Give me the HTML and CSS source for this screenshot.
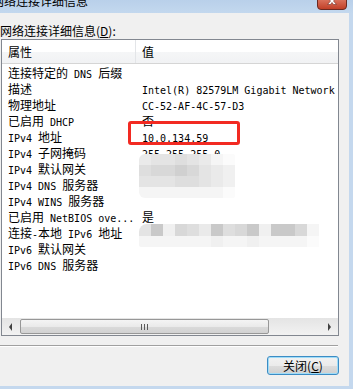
FILE: index.html
```html
<!DOCTYPE html>
<html lang="zh-CN">
<head>
    <meta charset="UTF-8">
    <title>网络连接详细信息</title>
    <link rel="stylesheet" href="styles.css">
</head>
<body>
    <div class="window">
        <div class="titlebar">
            <span class="title">网络连接详细信息</span>
            <svg class="close" width="30" height="10" viewBox="0 0 30 10">
                <defs>
                    <linearGradient id="closeFill" x1="0" y1="0" x2="0" y2="1">
                        <stop offset="0" stop-color="#d9705a"/>
                        <stop offset="1" stop-color="#c03d25"/>
                    </linearGradient>
                </defs>
                <path d="M0.5 0 V6 Q0.5 9.5 4 9.5 H26 Q29.5 9.5 29.5 6 V0" fill="url(#closeFill)" stroke="#6b2a22"/>
                <path d="M10.5 -2 L13.5 1 L10.5 4.5 H13.5 L15 2.5 L16.5 4.5 H19.5 L16.5 1 L19.5 -2" fill="#fff" stroke="#7d3a30" stroke-width="0.7"/>
            </svg>
        </div>
        <div class="frame">
            <div class="client">
                <div class="caption">网络连接详细信息(<u>D</u>):</div>

                <div class="listbox">
                    <div class="lv-head">
                        <div class="col-prop">属性</div>
                        <div class="col-val">值</div>
                    </div>
                    <div class="lv-body">
                        <div class="lv-row"><div class="col-prop">连接特定的<span class="en"> DNS </span>后缀</div><div class="col-val"></div></div>
                        <div class="lv-row"><div class="col-prop">描述</div><div class="col-val"><span class="en">Intel(R) 82579LM Gigabit Network Connection</span></div></div>
                        <div class="lv-row"><div class="col-prop">物理地址</div><div class="col-val"><span class="en">CC-52-AF-4C-57-D3</span></div></div>
                        <div class="lv-row"><div class="col-prop">已启用<span class="en"> DHCP</span></div><div class="col-val">否</div></div>
                        <div class="lv-row"><div class="col-prop"><span class="en">IPv4 </span>地址</div><div class="col-val"><span class="en">10.0.134.59</span></div></div>
                        <div class="lv-row"><div class="col-prop"><span class="en">IPv4 </span>子网掩码</div><div class="col-val"><span class="en">255.255.255.0</span></div></div>
                        <div class="lv-row"><div class="col-prop"><span class="en">IPv4 </span>默认网关</div><div class="col-val"></div></div>
                        <div class="lv-row"><div class="col-prop"><span class="en">IPv4 DNS </span>服务器</div><div class="col-val"></div></div>
                        <div class="lv-row"><div class="col-prop"><span class="en">IPv4 WINS </span>服务器</div><div class="col-val"></div></div>
                        <div class="lv-row"><div class="col-prop">已启用<span class="en"> NetBIOS ove...</span></div><div class="col-val">是</div></div>
                        <div class="lv-row"><div class="col-prop">连接<span class="en">-</span>本地<span class="en"> IPv6 </span>地址</div><div class="col-val"></div></div>
                        <div class="lv-row"><div class="col-prop"><span class="en">IPv6 </span>默认网关</div><div class="col-val"></div></div>
                        <div class="lv-row"><div class="col-prop"><span class="en">IPv6 DNS </span>服务器</div><div class="col-val"></div></div>
                    </div>

                    <div class="hscroll">
                        <div class="sb-arrow"><span class="tri-left"></span></div>
                        <div class="thumb"><span class="grip"></span></div>
                        <div class="sb-track"></div>
                        <div class="sb-arrow"><span class="tri-right"></span></div>
                    </div>

                    <!-- mosaic over the hidden addresses -->
                    <div class="redact redact-v4">
                        <i class="f"></i><i class="e"></i><i class="e"></i><i class="d"></i><i class="e"></i><i class="f"></i><i class="h"></i><i class="k"></i>
                        <i class="d"></i><i class="c"></i><i class="c"></i><i class="b"></i><i class="c"></i><i class="e"></i><i class="f"></i><i class="g"></i>
                        <i class="e"></i><i class="e"></i><i class="e"></i><i class="d"></i><i class="d"></i><i class="e"></i><i class="f"></i><i class="g"></i>
                        <i class="h"></i><i class="h"></i><i class="h"></i><i class="h"></i><i class="h"></i><i class="h"></i><i class="h"></i><i class="k"></i>
                    </div>
                    <div class="redact redact-v6">
                        <i class="e"></i><i class="a"></i><i class="g"></i><i class="c"></i><i class="d"></i><i class="f"></i><i class="a"></i><i class="d"></i><i class="c"></i><i class="a"></i><i class="g"></i><i class="a"></i><i class="a"></i><i class="c"></i><i class="h"></i>
                        <i class="h"></i><i class="h"></i><i class="h"></i><i class="h"></i><i class="h"></i><i class="h"></i><i class="g"></i><i class="h"></i><i class="h"></i><i class="g"></i><i class="h"></i><i class="h"></i><i class="h"></i><i class="h"></i><i class="k"></i>
                    </div>

                    <div class="mark"></div>
                </div>

                <div class="separator"></div>

                <div class="buttons">
                    <button class="btn-default">关闭(<u>C</u>)</button>
                </div>
            </div>
        </div>
    </div>
</body>
</html>
```

FILE: styles.css
```css
/* fenêtre façon Windows 7 */
body {
    margin: 0;
    background: #c4d8ee;
    font-family: "Noto Sans CJK SC", sans-serif;
    font-size: 12px;
    color: #000;
}

.window {
    width: 353px;
    height: 389px;
    display: flex;
    flex-direction: column;
    overflow: hidden;
}

.titlebar {
    height: 13px;
    flex: none;
    display: flex;
    justify-content: space-between;
    background: linear-gradient(#b9d0ea, #c3d8ee);
    overflow: hidden;
}

.title {
    margin: -5px 0 0 -8px;
    height: 12px;
    line-height: 12px;
    white-space: nowrap;
}

.close {
    flex: none;
    margin-right: 6px;
}

.frame {
    flex: 1;
    display: flex;
}

.client {
    width: 349px;
    height: 373px;
    background: #f0f0f0;
    display: flex;
    flex-direction: column;
}

.caption {
    margin-top: 10px;
    height: 16px;
    line-height: 16px;
    white-space: nowrap;
}

/* liste */
.listbox {
    position: relative;
    margin-left: 1px;
    width: 338px;
    height: 297px;
    box-sizing: border-box;
    border: 1px solid #828790;
    background: #fff;
    display: flex;
    flex-direction: column;
    overflow: hidden;
}

.lv-head {
    height: 23px;
    flex: none;
    display: flex;
    background: linear-gradient(#fff 0%, #fff 50%, #f5f6f7 51%, #f1f2f4 100%);
    border-bottom: 1px solid #d5d5d5;
}

.lv-head .col-prop {
    width: 134px;
    box-sizing: border-box;
    padding-left: 6px;
    border-right: 1px solid #e3e5e8;
    line-height: 23px;
}

.lv-head .col-val {
    padding-left: 6px;
    line-height: 23px;
}

.lv-body {
    flex: 1;
    padding-top: 1px;
}

.lv-row {
    display: flex;
    height: 16px;
    line-height: 16px;
    white-space: nowrap;
}

.lv-row .col-prop {
    width: 134px;
    flex: none;
    box-sizing: border-box;
    padding-left: 6px;
    overflow: hidden;
}

.lv-row .col-val {
    padding-left: 6px;
}

.en {
    font-family: "DejaVu Sans Mono", monospace;
    font-size: 10px;
    white-space: pre;
}

/* barre de défilement horizontale */
.hscroll {
    height: 17px;
    flex: none;
    display: flex;
    background: linear-gradient(#e4e4e4, #f2f2f2);
}

.sb-arrow {
    width: 17px;
    flex: none;
    display: flex;
    align-items: center;
    justify-content: center;
}

.tri-left {
    border-top: 4px solid transparent;
    border-bottom: 4px solid transparent;
    border-right: 3px solid #404040;
}

.tri-right {
    border-top: 4px solid transparent;
    border-bottom: 4px solid transparent;
    border-left: 3px solid #404040;
}

.thumb {
    width: 249px;
    margin: 1px 0 1px 1px;
    box-sizing: border-box;
    border: 1px solid #979797;
    border-radius: 2px;
    background: linear-gradient(#f4f4f4 0%, #eaeaea 50%, #dadada 51%, #d2d2d2 100%);
    display: flex;
    align-items: center;
    justify-content: center;
}

.grip {
    width: 7px;
    height: 6px;
    background: repeating-linear-gradient(90deg, #5a5a5a 0 1px, transparent 1px 3px);
}

.sb-track {
    flex: 1;
}

/* mosaïque */
.redact {
    position: absolute;
    display: grid;
    grid-template-columns: repeat(auto-fill, 12px);
}

.redact-v4 {
    left: 137px;
    top: 114px;
    width: 96px;
    grid-auto-rows: 11px;
    border-radius: 6px 2px 2px 6px;
    overflow: hidden;
}

.redact-v6 {
    left: 137px;
    top: 184px;
    width: 180px;
    grid-template-rows: 12px 11px;
    border-radius: 8px 0 0 2px;
    overflow: hidden;
}

.redact i { display: block; }
.redact .a { background: #c9c9c9; }
.redact .b { background: #d0d0d0; }
.redact .c { background: #d8d8d8; }
.redact .d { background: #dedede; }
.redact .e { background: #e4e4e4; }
.redact .f { background: #eaeaea; }
.redact .g { background: #f0f0f0; }
.redact .h { background: #f5f5f5; }
.redact .k { background: #fbfbfb; }

/* encadré rouge */
.mark {
    position: absolute;
    left: 126px;
    top: 81px;
    width: 112px;
    height: 24px;
    box-sizing: border-box;
    border: 3px solid #f22a22;
    border-radius: 3px;
}

.separator {
    margin-top: 9px;
    width: 338px;
    border-top: 1px solid #a0a0a0;
    border-bottom: 1px solid #fff;
}

.buttons {
    margin-top: 9px;
    padding-right: 10px;
    display: flex;
    justify-content: flex-end;
}

.btn-default {
    width: 72px;
    height: 19px;
    box-sizing: border-box;
    padding: 0;
    border: 1px solid #3c8cc4;
    border-radius: 3px;
    background: linear-gradient(#f2f2f2 0%, #ebebeb 50%, #dddddd 51%, #cfcfcf 100%);
    box-shadow: inset 0 0 0 1px #9fdcf8;
    font-family: "Noto Sans CJK SC", sans-serif;
    font-size: 12px;
    line-height: 16px;
    color: #000;
}
```
